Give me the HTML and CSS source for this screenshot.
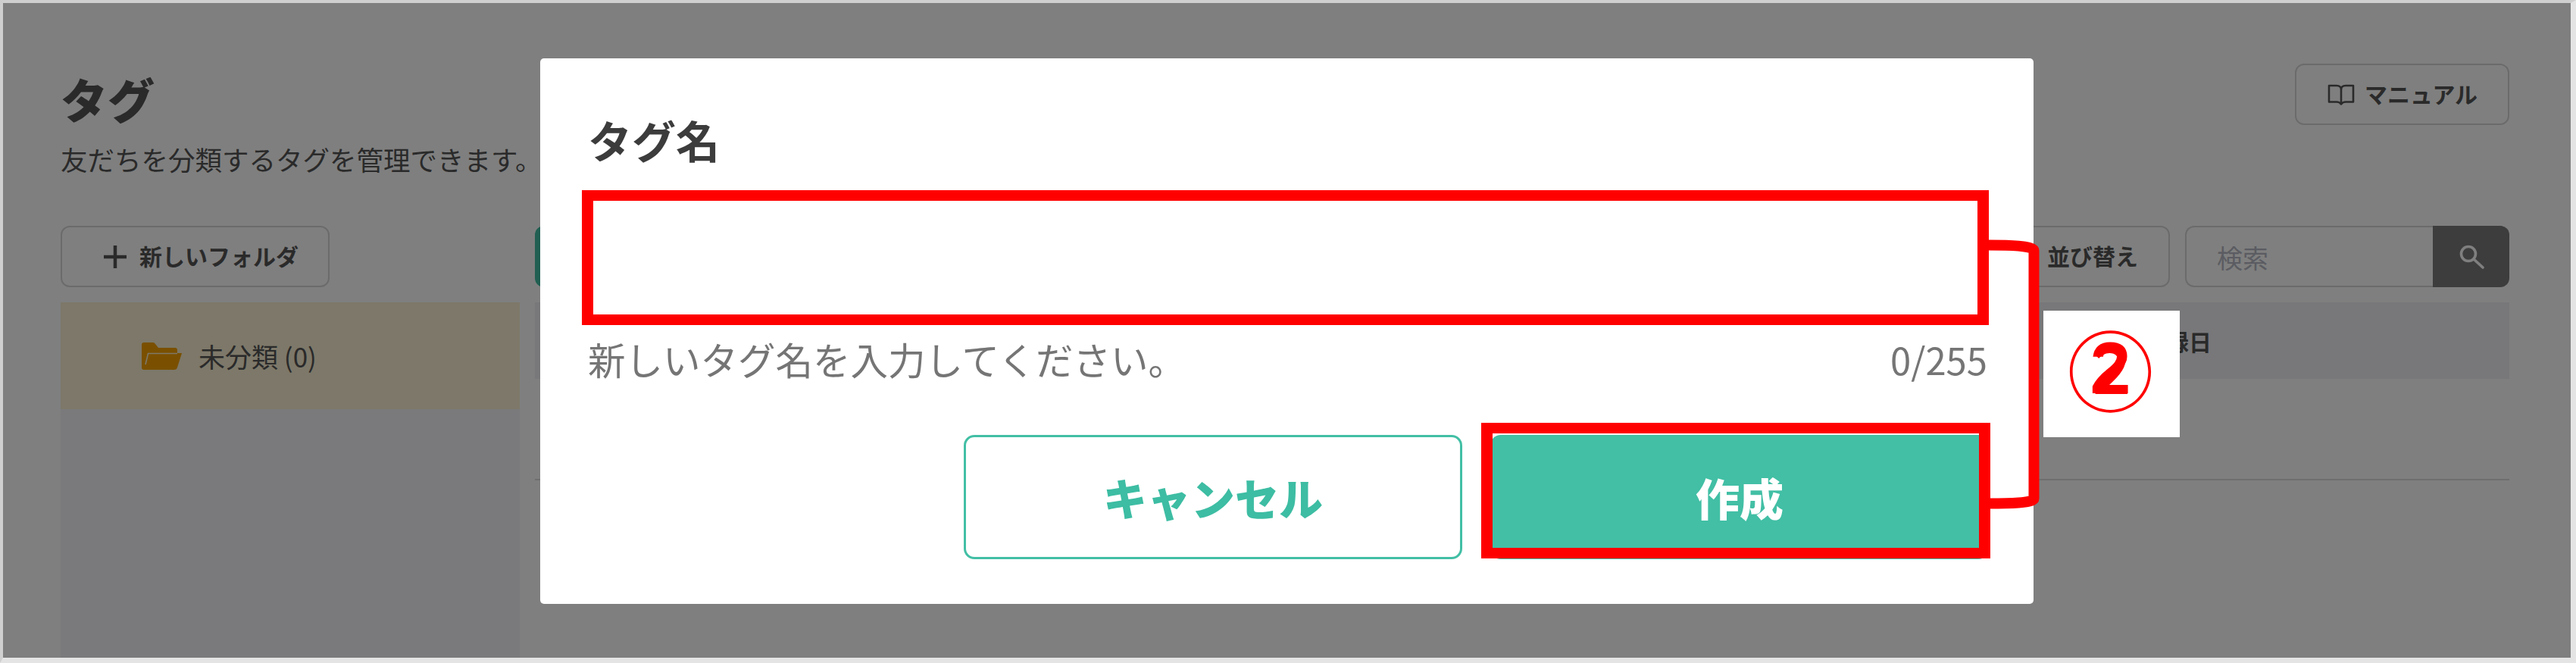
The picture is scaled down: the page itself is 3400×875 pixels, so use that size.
FILE: index.html
```html
<!DOCTYPE html>
<html lang="ja">
<head>
<meta charset="utf-8">
<title>タグ</title>
<link rel="stylesheet" href="styles.css">
</head>
<body>
<div class="page">
  <header class="page-head">
    <div class="page-title-block">
      <h1 class="page-title">タグ</h1>
      <p class="page-sub">友だちを分類するタグを管理できます。</p>
    </div>
    <button class="btn btn-manual" type="button">
      <svg class="icon-book" viewBox="0 0 36 28" aria-hidden="true"><path d="M18 7.5Q18 2 12 2H2V23.5H12Q16 23.5 18 26.5Q20 23.5 24 23.5H34V2H24Q18 2 18 7.5V26"/></svg>
      <span class="btn-label">マニュアル</span>
    </button>
  </header>
  <main class="columns">
    <section class="col-side">
      <button class="btn btn-folder" type="button">
        <svg class="icon-plus" viewBox="0 0 30 30" aria-hidden="true"><path d="M15 0V30M0 15H30"/></svg>
        <span class="btn-label">新しいフォルダ</span>
      </button>
      <div class="folder-list">
        <div class="folder-row">
          <svg class="icon-folder" viewBox="0 0 53 36" aria-hidden="true">
            <path class="folder-fill" d="M3 0H15Q17 0 18 2L22 7H44Q47 7 47 10V14H53L47 33Q46 36 43 36H3Q0 36 0 33V3Q0 0 3 0Z"/>
            <path class="folder-gap" d="M5 29L8.5 14.5H47"/>
          </svg>
          <span>未分類 (0)</span>
        </div>
      </div>
    </section>
    <section class="col-main">
      <div class="toolbar">
        <button class="btn-green" type="button"></button>
        <div class="toolbar-right">
          <button class="btn btn-sort" type="button"><span class="btn-label">並び替え</span></button>
          <div class="search">
            <span class="search-ph">検索</span>
            <span class="search-btn">
              <svg class="icon-search" viewBox="0 0 34 32" aria-hidden="true"><circle cx="12" cy="12" r="9.5"/><path d="M19 19L31 30"/></svg>
            </span>
          </div>
        </div>
      </div>
      <div class="table-head"><span class="th-date">登録日</span></div>
      <div class="table-row"></div>
    </section>
  </main>

  <div class="overlay">
    <div class="modal">
      <h2 class="modal-title">タグ名</h2>
      <div class="modal-input"></div>
      <div class="modal-help"><span>新しいタグ名を入力してください。</span><span class="modal-count">0/255</span></div>
      <div class="modal-actions">
        <button class="modal-btn modal-cancel" type="button">キャンセル</button>
        <button class="modal-btn modal-create" type="button">作成</button>
      </div>
    </div>
    <div class="mark mark-input"></div>
    <div class="mark mark-create"></div>
    <svg class="bracket" viewBox="0 0 76 370" aria-hidden="true"><path d="M5 9.5C30 9.5 64.5 10 64.5 17V344C64.5 350 30 350.5 5 350.5"/></svg>
    <div class="step-label">②</div>
  </div>
</div>
</body>
</html>
```
FILE: styles.css
```css
* { box-sizing: border-box; }
html, body { margin: 0; padding: 0; }
body {
  width: 3400px;
  height: 875px;
  overflow: hidden;
  font-family: "Noto Sans CJK JP", "Noto Sans", sans-serif;
  color: #555;
}
button { font-family: inherit; }

.page {
  position: relative;
  width: 3400px;
  height: 875px;
  padding: 0 81px 0 76px;
  background: #fff;
  border-style: solid;
  border-color: #cfcfcf #e4e4e4 #e4e4e4 #cfcfcf;
  border-width: 4px 7px 7px 4px;
  overflow: hidden;
}

/* header */
.page-head {
  height: 294px;
  padding-top: 80px;
  display: flex;
  justify-content: space-between;
  align-items: flex-start;
}
.page-title-block { padding-top: 15px; }
.page-title {
  margin: 0 0 31px;
  font-size: 62px;
  line-height: 62px;
  font-weight: 900;
}
.page-sub {
  margin: 0;
  font-size: 35.5px;
  line-height: 36px;
}

/* buttons */
.btn {
  display: flex;
  align-items: center;
  height: 81px;
  padding: 0;
  background: transparent;
  border: 2px solid #d6d6d6;
  border-radius: 12px;
  color: #555;
  font-size: 30px;
  font-weight: 700;
}
.btn-label { padding-bottom: 3px; }
.btn-manual { width: 283px; padding-left: 41px; gap: 13px; }
.icon-book { width: 36px; height: 28px; fill: none; stroke: #555; stroke-width: 2.6; stroke-linejoin: round; }
.btn-folder { width: 355px; padding-left: 55px; gap: 17px; }
.icon-plus { width: 30px; height: 30px; fill: none; stroke: #555; stroke-width: 4.5; }
.btn-sort { width: 224px; padding-left: 60px; }

/* columns */
.columns {
  display: grid;
  grid-template-columns: 606px 2606px;
  column-gap: 20px;
}
.col-side, .col-main { display: flex; flex-direction: column; }
.folder-list {
  margin-top: 20px;
  height: 500px;
  background: #f5f5f8;
}
.folder-row {
  height: 141px;
  padding-left: 107px;
  display: flex;
  align-items: center;
  gap: 22px;
  background: #faf0d2;
  font-size: 35px;
  line-height: 1;
}
.icon-folder { width: 53px; height: 36px; }
.folder-fill { fill: #f4a000; }
.folder-gap { fill: none; stroke: #faf0d2; stroke-width: 1.6; }

/* toolbar */
.toolbar {
  height: 81px;
  display: flex;
  justify-content: space-between;
}
.btn-green {
  width: 300px;
  height: 81px;
  border: 0;
  border-radius: 12px;
  background: #42bfa5;
}
.toolbar-right { display: flex; gap: 20px; }
.search {
  width: 428px;
  height: 81px;
  display: flex;
  align-items: stretch;
  border: 2px solid #d6d6d6;
  border-right: 0;
  border-radius: 12px;
}
.search-ph {
  flex: 1;
  padding-left: 40px;
  font-size: 34px;
  line-height: 79px;
  color: #b6b9c4;
}
.search-btn {
  width: 101px;
  margin: -2px 0;
  display: flex;
  align-items: center;
  justify-content: center;
  background: #7a7a7a;
  border-radius: 0 12px 12px 0;
}
.icon-search { width: 34px; height: 32px; fill: none; stroke: #fff; stroke-width: 3.6; stroke-linecap: round; transform: translateX(1px); }

/* table */
.table-head {
  margin-top: 20px;
  height: 101px;
  padding-left: 2123px;
  display: flex;
  align-items: center;
  background: #f1f1f4;
  font-size: 30px;
  font-weight: 700;
}
.th-date { line-height: 1; }
.table-row { height: 134px; border-bottom: 2px solid #dcdcdc; }

/* dialog */
.overlay {
  position: absolute;
  inset: 0;
  padding-top: 2px;
  display: flex;
  align-items: center;
  justify-content: center;
  background: rgba(0, 0, 0, .5);
}
.modal {
  width: 1971px;
  height: 720px;
  padding: 78px 59px 0 63px;
  display: flex;
  flex-direction: column;
  background: #fff;
  border-radius: 5px;
  color: #3c3c3c;
}
.modal-title {
  margin: 0;
  font-size: 58px;
  line-height: 58px;
  font-weight: 700;
}
.modal-input { margin-top: 44px; height: 150px; }
.modal-help {
  margin-top: 42px;
  display: flex;
  justify-content: space-between;
  align-items: center;
  font-size: 49.5px;
  line-height: 50px;
  color: #757575;
}
.modal-count { font-size: 49px; padding-right: 2px; }
.modal-actions {
  margin-top: 75px;
  display: flex;
  justify-content: flex-end;
  gap: 37px;
}
.modal-btn {
  width: 658px;
  height: 164px;
  border-radius: 14px;
  font-size: 58px;
  font-weight: 900;
}
.modal-cancel { background: #fff; border: 3px solid #42bfa5; color: #3dbda3; }
.modal-create { background: #42bfa5; border: 0; color: #fff; }

/* annotations */
.mark {
  position: absolute;
  border: 14px solid #f00;
  border-width: 14px 15px;
}
.mark-input { left: 764px; top: 247px; width: 1857px; height: 178px; }
.mark-create { left: 1951px; top: 554px; width: 672px; height: 179px; }
.bracket {
  position: absolute;
  left: 2616px;
  top: 310px;
  width: 76px;
  height: 370px;
  fill: none;
  stroke: #f00;
  stroke-width: 14;
}
.step-label {
  position: absolute;
  left: 2693px;
  top: 406px;
  width: 180px;
  height: 167px;
  padding: 0 3px 18px 0;
  display: flex;
  align-items: center;
  justify-content: center;
  background: #fff;
  color: #f00;
  font-size: 115px;
  line-height: 1;
  font-weight: 400;
}
.step-label::after {
  content: "2";
  position: absolute;
  left: 0;
  top: 27px;
  width: 177px;
  text-align: center;
  font-family: "Liberation Sans", sans-serif;
  font-size: 97px;
  line-height: 97px;
  font-weight: 700;
}
```
